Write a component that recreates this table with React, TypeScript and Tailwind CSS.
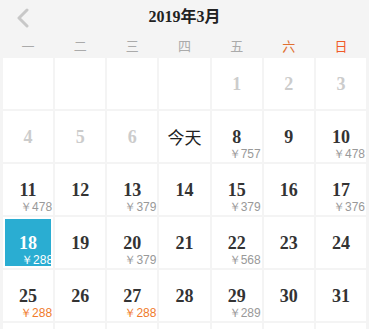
const prices: Record<number, { p: string; hot?: boolean }> = {
  8: { p: "757" },
  10: { p: "478" },
  11: { p: "478" },
  13: { p: "379" },
  15: { p: "379" },
  17: { p: "376" },
  18: { p: "288" },
  20: { p: "379" },
  22: { p: "568" },
  25: { p: "288", hot: true },
  27: { p: "288", hot: true },
  29: { p: "289" },
};

const weekdays = ["一", "二", "三", "四", "五", "六", "日"];
const serif = { fontFamily: '"Liberation Serif", "Noto Sans CJK SC", serif' };

function DayCell({ day }: { day: number | null }) {
  if (day === null) return <div className="bg-white h-[51px]" />;
  const info = prices[day];
  const past = day < 7;
  const today = day === 7;
  const selected = day === 18;

  return (
    <div className={`h-[51px] bg-white ${selected ? "p-[2px]" : ""}`}>
      <div
        className={`h-full flex flex-col ${selected ? "bg-[#2aadd2] pt-[14px]" : "pt-[16px]"}`}
      >
        {today ? (
          <div className="text-center text-[17px] leading-[20px] text-[#222] font-['Noto_Sans_CJK_SC',sans-serif]">
            今天
          </div>
        ) : (
          <div
            className={`text-center text-[18px] leading-[20px] font-bold ${
              selected ? "text-white" : past ? "text-[#cccccc]" : "text-[#333]"
            }`}
            style={serif}
          >
            {day}
          </div>
        )}
        {info && (
          <div
            className={`text-right text-[12px] leading-[14px] font-['Liberation_Sans',sans-serif] ${
              selected ? "text-white -mr-[2px]" : info.hot ? "text-[#f07b2c] pr-[1px]" : "text-[#999] pr-[1px]"
            }`}
          >
            ￥{info.p}
          </div>
        )}
      </div>
    </div>
  );
}

export default function App() {
  const cells: (number | null)[] = [null, null, null, null];
  for (let d = 1; d <= 31; d++) cells.push(d);
  while (cells.length < 42) cells.push(null);

  return (
    <div className="w-[369px] h-[329px] overflow-hidden bg-[#f4f4f4] font-['Noto_Sans_CJK_SC',sans-serif]">
      <div className="relative h-[34px] flex items-center justify-center">
        <svg
          className="absolute left-[15px] top-[8px]"
          width="16"
          height="20"
          viewBox="0 0 16 20"
          fill="none"
        >
          <path d="M12 2 L4 10 L12 18" stroke="#c8c8c8" strokeWidth="3" strokeLinecap="round" strokeLinejoin="round" />
        </svg>
        <div className="text-[16px] font-bold text-[#222]" style={serif}>
          2019年3月
        </div>
      </div>
      <div className="grid grid-cols-7 gap-x-[2px] px-[3px] h-[24px] items-center">
        {weekdays.map((w, i) => (
          <div
            key={w}
            className={`text-center text-[13px] ${
              i === 5 ? "text-[#e06f30]" : i === 6 ? "text-[#f05a28]" : "text-[#aaa]"
            }`}
          >
            {w}
          </div>
        ))}
      </div>
      <div className="grid grid-cols-7 gap-[2px] px-[3px]">
        {cells.map((d, i) => (
          <DayCell key={i} day={d} />
        ))}
      </div>
    </div>
  );
}
